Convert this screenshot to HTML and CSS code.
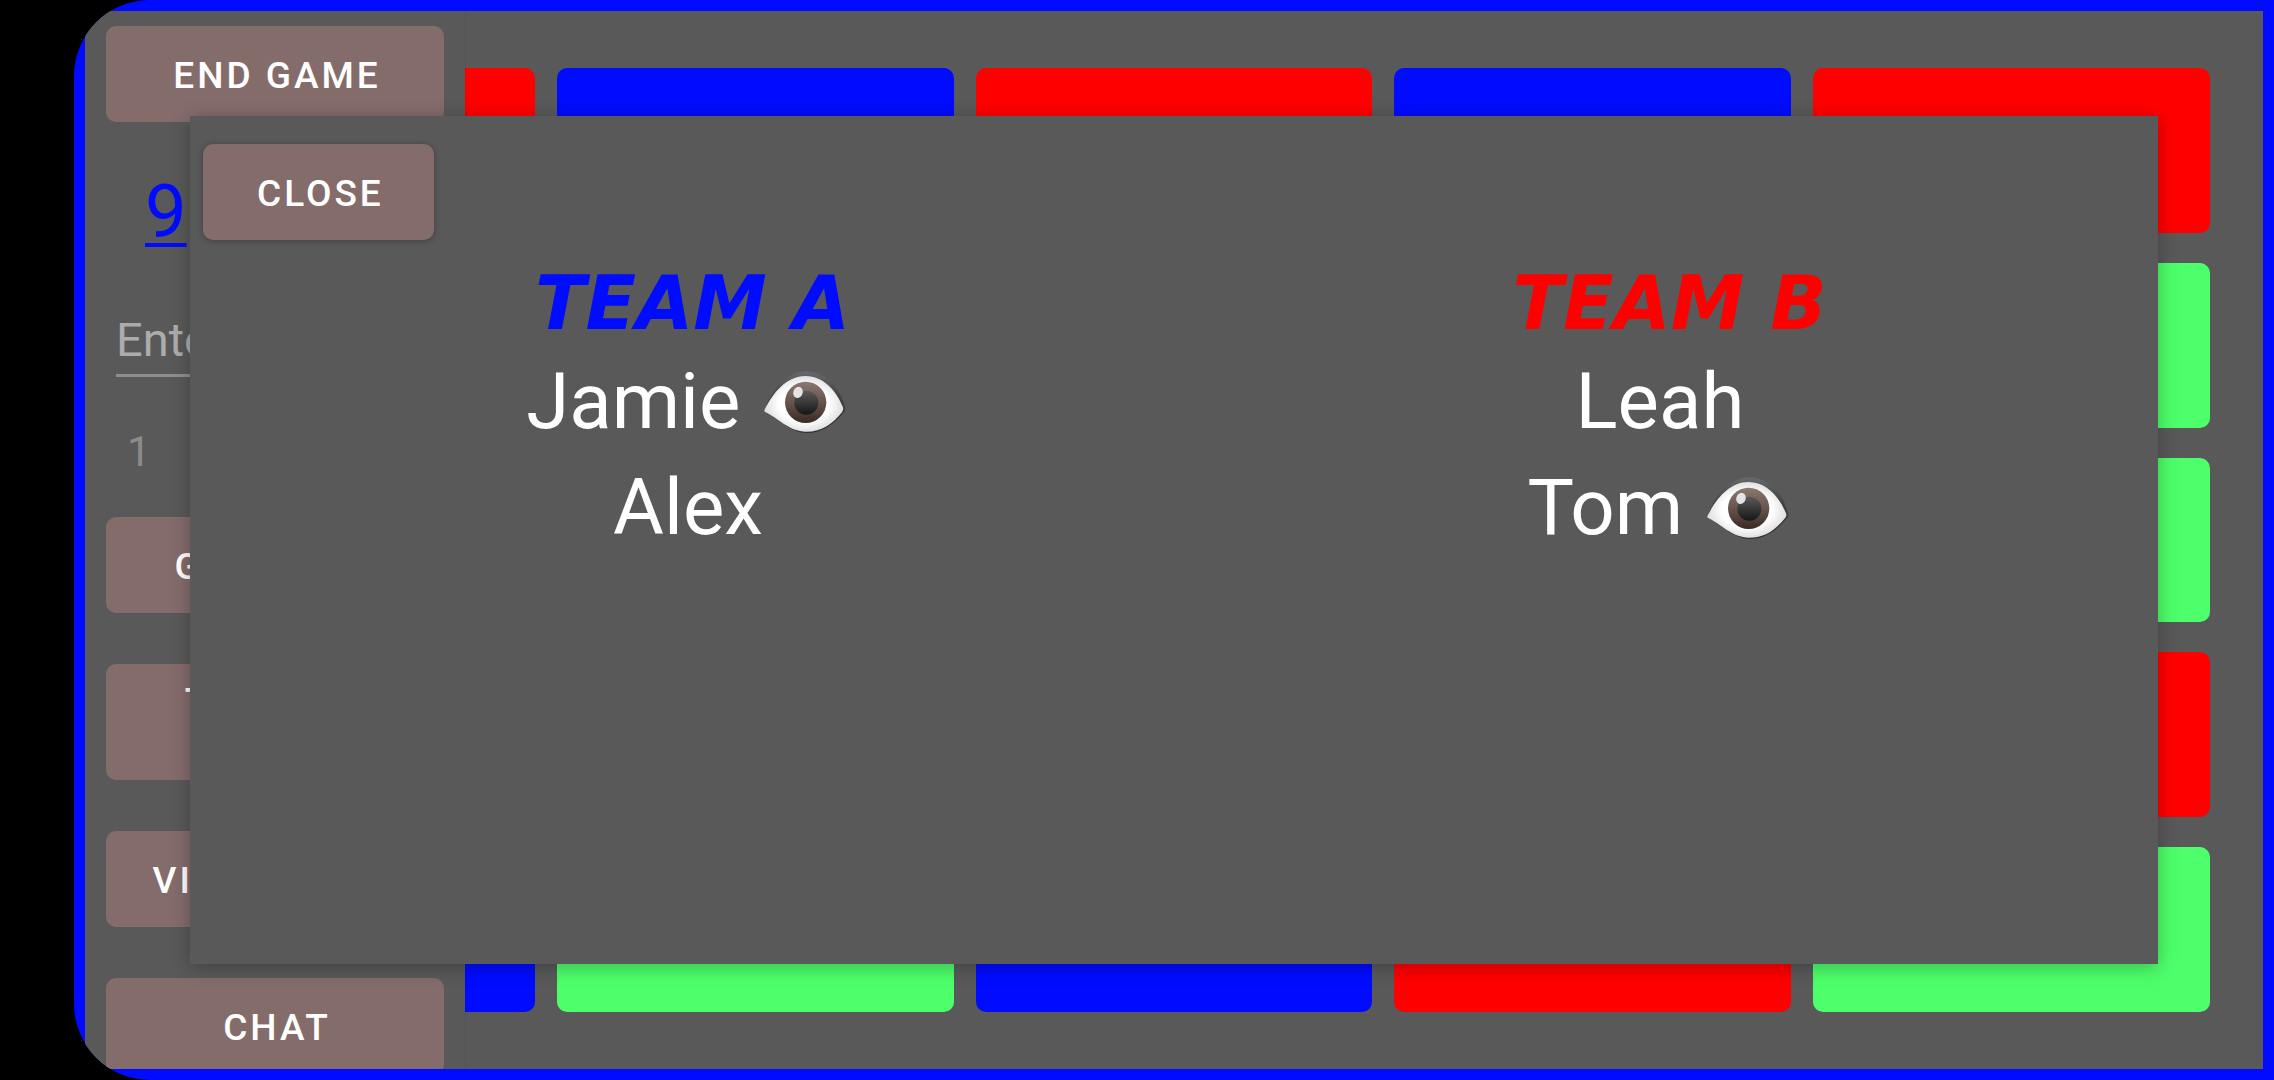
FILE: index.html
```html
<!DOCTYPE html>
<html lang="en">
<head>
  <meta charset="utf-8">
  <meta name="viewport" content="width=device-width, initial-scale=1">
  <title>Teams</title>
  <link rel="stylesheet" href="styles.css">
</head>
<body>
  <svg class="symbols" aria-hidden="true">
    <defs>
      <radialGradient id="white" cx="50%" cy="50%" r="58%">
        <stop offset="0.55" stop-color="#ffffff"/>
        <stop offset="1" stop-color="#d2d2d2"/>
      </radialGradient>
      <linearGradient id="iris" x1="0" y1="0" x2="0" y2="1">
        <stop offset="0" stop-color="#8b7870"/>
        <stop offset="0.5" stop-color="#66544d"/>
        <stop offset="1" stop-color="#3a2922"/>
      </linearGradient>
      <linearGradient id="pupil" x1="0" y1="0" x2="0" y2="1">
        <stop offset="0" stop-color="#5a5a5a"/>
        <stop offset="1" stop-color="#161616"/>
      </linearGradient>
      <linearGradient id="lid" x1="0" y1="0" x2="0" y2="1">
        <stop offset="0" stop-color="#68686c"/>
        <stop offset="0.4" stop-color="#434346"/>
        <stop offset="1" stop-color="#303033"/>
      </linearGradient>
      <symbol id="eye" viewBox="44 60 246 186">
        <path fill="url(#lid)" d="M48 172C68 118 112 62 170 61C226 61 272 106 288 172Q289 181 282 186C252 222 218 246 172 246C126 245 90 208 60 188Z"/>
        <path fill="url(#white)" d="M45 178C70 126 112 75 168 75C224 75 262 122 281 169Q284 176 279 182C250 218 220 242 170 242C120 242 90 204 49 184Q44 182 45 178Z"/>
        <circle cx="169" cy="154" r="62" fill="url(#iris)"/>
        <circle cx="171" cy="155" r="36" fill="url(#pupil)"/>
        <ellipse cx="146" cy="124" rx="14" ry="17" fill="#e4e4e4" transform="rotate(20 146 124)"/>
      </symbol>
    </defs>
  </svg>

  <div class="frame">
    <main class="screen">
      <div class="board">
        <button class="card red" aria-label="Card 1"></button>
        <button class="card blue" aria-label="Card 2"></button>
        <button class="card red" aria-label="Card 3"></button>
        <button class="card blue" aria-label="Card 4"></button>
        <button class="card red" aria-label="Card 5"></button>
        <button class="card green" aria-label="Card 6"></button>
        <button class="card blue" aria-label="Card 7"></button>
        <button class="card red" aria-label="Card 8"></button>
        <button class="card green" aria-label="Card 9"></button>
        <button class="card green" aria-label="Card 10"></button>
        <button class="card red" aria-label="Card 11"></button>
        <button class="card green" aria-label="Card 12"></button>
        <button class="card blue" aria-label="Card 13"></button>
        <button class="card blue" aria-label="Card 14"></button>
        <button class="card green" aria-label="Card 15"></button>
        <button class="card blue" aria-label="Card 16"></button>
        <button class="card red" aria-label="Card 17"></button>
        <button class="card green" aria-label="Card 18"></button>
        <button class="card red" aria-label="Card 19"></button>
        <button class="card red" aria-label="Card 20"></button>
        <button class="card blue" aria-label="Card 21"></button>
        <button class="card green" aria-label="Card 22"></button>
        <button class="card blue" aria-label="Card 23"></button>
        <button class="card red" aria-label="Card 24"></button>
        <button class="card green" aria-label="Card 25"></button>
      </div>

      <aside class="drawer">
        <button class="btn">END GAME</button>
        <p class="score"><span class="score-a">9</span></p>
        <input class="clue" type="text" placeholder="Enter clue" aria-label="Clue">
        <select class="count" aria-label="Number of words"><option>1</option></select>
        <div class="actions">
          <button class="btn">GIVE CLUE</button>
          <button class="btn tall">TEAM A'S<br>TURN</button>
          <button class="btn">VIEW TEAMS</button>
          <button class="btn">CHAT</button>
        </div>
      </aside>

      <div class="overlay">
        <section class="dialog" role="dialog" aria-label="Teams">
          <button class="btn close">CLOSE</button>
          <div class="titles">
            <h2 class="title title-a">TEAM A</h2>
            <h2 class="title title-b">TEAM B</h2>
          </div>
          <div class="players">
            <ul class="team">
              <li>Jamie <svg class="eye" role="img" aria-label="Spymaster"><use href="#eye"/></svg></li>
              <li>Alex</li>
            </ul>
            <ul class="team">
              <li>Leah</li>
              <li>Tom <svg class="eye" role="img" aria-label="Spymaster"><use href="#eye"/></svg></li>
            </ul>
          </div>
        </section>
      </div>
    </main>
  </div>
</body>
</html>
```
FILE: styles.css
```css
:root {
  --blue: #000bff;
  --red: #ff0000;
  --green: #4dff6b;
  --grey: #595959;
  --button: #846c6b;
}

* {
  box-sizing: border-box;
}

body {
  margin: 0;
  background: #000;
  color: #fff;
  font-family: Roboto, "Liberation Sans", sans-serif;
}

button,
input,
select {
  margin: 0;
  padding: 0;
  border: 0;
  font-family: inherit;
}

.symbols {
  position: absolute;
  width: 0;
  height: 0;
}

.frame {
  display: flex;
  min-height: 100vh;
  margin-left: 74px;
  padding: 11px;
  background: var(--blue);
  border-radius: 76px 0 0 76px;
  overflow: hidden;
}

.screen {
  position: relative;
  flex: 1;
  display: flex;
  background: var(--grey);
  overflow: hidden;
}

.board {
  flex: 1;
  display: grid;
  grid-template-columns: repeat(5, 1fr);
  grid-template-rows: repeat(5, 1fr);
  gap: 30px 22px;
  padding: 57px 53px;
}

.card {
  border-radius: 10px;
}

.red {
  background: var(--red);
}

.blue {
  background: var(--blue);
}

.green {
  background: var(--green);
}

.drawer {
  position: absolute;
  inset: 0 auto 0 0;
  width: 380px;
  padding: 15px 21px;
  display: flex;
  flex-direction: column;
  background: var(--grey);
  box-shadow: 0 0 1px rgba(0, 0, 0, 0.4);
  overflow: hidden;
}

.btn {
  flex: none;
  height: 96px;
  padding: 3px 0 0 4px;
  background: var(--button);
  border-radius: 10px;
  color: #fff;
  font-size: 37px;
  font-weight: 500;
  line-height: 44px;
  letter-spacing: 3px;
}

.tall {
  height: 116px;
}

.score {
  margin: 46px 39px 0;
  color: var(--blue);
  font-size: 74px;
  line-height: 88px;
}

.score-a {
  text-decoration: underline;
  text-decoration-thickness: 4px;
  text-underline-offset: 6px;
}

.clue {
  flex: none;
  height: 73px;
  margin: 48px 10px 0;
  border-bottom: 3px solid #8f8f8f;
  background: transparent;
  color: #fff;
  font-size: 47px;
}

.clue::placeholder {
  color: #acacac;
  opacity: 1;
}

.count {
  flex: none;
  height: 60px;
  margin: 44px 21px 36px;
  appearance: none;
  background: transparent;
  color: #8b8b8b;
  font-size: 42px;
}

.actions {
  display: flex;
  flex-direction: column;
  gap: 51px;
}

.overlay {
  position: absolute;
  inset: 0;
  display: flex;
  padding: 105px;
}

.dialog {
  flex: 1;
  padding-top: 28px;
  background: var(--grey);
  box-shadow: 0 3px 18px rgba(0, 0, 0, 0.28);
}

.close {
  margin-left: 13px;
  padding: 3px 50px 0 54px;
  box-shadow: 0 1px 6px rgba(0, 0, 0, 0.3);
}

.titles,
.players {
  display: grid;
  grid-template-columns: 1fr 1fr;
  text-align: center;
}

.titles {
  margin-top: 17px;
  padding-left: 14px;
}

.players {
  padding: 0 12px;
}

.title {
  margin: 0;
  font-family: "DejaVu Sans", sans-serif;
  font-size: 74px;
  font-style: italic;
  font-weight: 700;
  line-height: 92px;
}

.title-a {
  color: var(--blue);
}

.title-b {
  color: var(--red);
}

.team {
  margin: 0;
  padding: 0;
  list-style: none;
  font-size: 78px;
  line-height: 106px;
}

.eye {
  width: 82px;
  height: 62px;
  margin: 0 4px;
  vertical-align: -5px;
}
```
